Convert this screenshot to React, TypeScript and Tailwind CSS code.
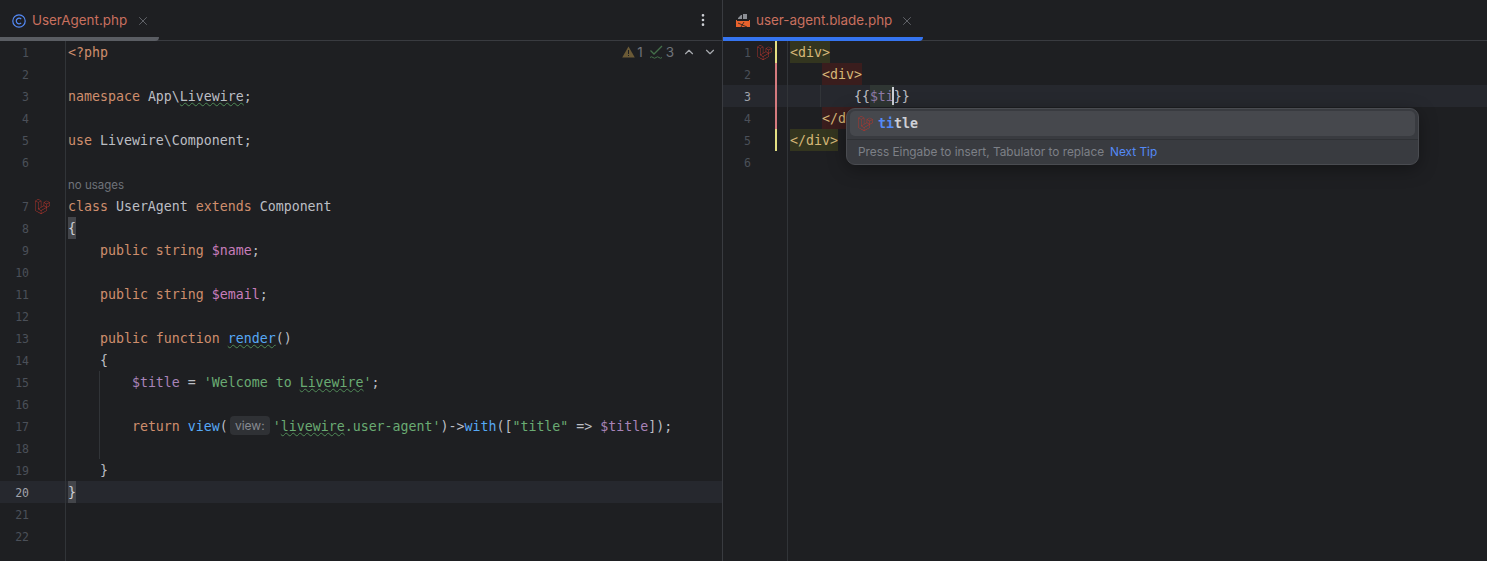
import React from "react";
import { ChevronDown, ChevronUp, MoreVertical, X } from "lucide-react";
import { SiLaravel } from "react-icons/si";

const ui = "font-['Inter',sans-serif]";
const mono = "font-['DejaVu_Sans_Mono',monospace] text-[13.28px] leading-[22px] whitespace-pre";
const num = "font-['DejaVu_Sans_Mono',monospace] text-[11.5px]";

const K = (p: { children: React.ReactNode }) => <span className="text-[#cf8e6d]">{p.children}</span>;
const V = (p: { children: React.ReactNode }) => <span className="text-[#c77dbb]">{p.children}</span>;
const L = (p: { children: React.ReactNode }) => <span className="text-[#a883b8]">{p.children}</span>;
const S = (p: { children: React.ReactNode }) => <span className="text-[#6aab73]">{p.children}</span>;
const F = (p: { children: React.ReactNode }) => <span className="text-[#56a8f5]">{p.children}</span>;
const Wavy = (p: { children: React.ReactNode; color: string }) => (
  <span className={`underline decoration-wavy decoration-1 underline-offset-1 ${p.color}`}>{p.children}</span>
);
const Match = (p: { children: React.ReactNode }) => (
  <span className="-mt-px inline-block h-[22px] bg-[#43454a] pt-px align-top text-[#ced0d6]">{p.children}</span>
);
const Tag = (p: { children: React.ReactNode; bg: string }) => (
  <span className={`-mt-px inline-block h-[22px] pt-px align-top text-[#d5b778] ${p.bg}`}>{p.children}</span>
);
const Guide = () => <span className="absolute top-0 bottom-0 left-[33px] w-px bg-[#313438]" />;

function PhpIcon() {
  return (
    <svg width="14" height="14" viewBox="0 0 14 14" fill="none" stroke="#548af7" strokeWidth="1.2">
      <circle cx="7" cy="7" r="6.2" />
      <path d="M9.2 5.2A2.8 2.8 0 1 0 9.2 8.8" />
    </svg>
  );
}

function BladeIcon() {
  return (
    <svg width="16" height="16" viewBox="0 0 16 16">
      <path d="M3 5l3-3h1v4H3zM8 1h4v5H8z" fill="#8b8e94" />
      <path d="M1 7h1v1h12V7h1v7H1z" fill="#e8622d" />
      <path d="M3 10l9 4M9 9l-3 5" stroke="#1e1f22" strokeWidth="0.8" fill="none" />
    </svg>
  );
}

function Tab(p: { icon: React.ReactNode; name: string; width: string; line: string; gap: string }) {
  return (
    <div className={`flex h-[41px] items-center rounded-br-sm border-b-4 pl-[12px] pt-[4px] ${p.width} ${p.line} ${p.gap}`}>
      {p.icon}
      <span className={`${ui} text-[13.4px] text-[#c9705f]`}>{p.name}</span>
      <X size={14} strokeWidth={1.2} className="ml-[3px] text-[#7d8087]" />
    </div>
  );
}

function Code(p: { children?: React.ReactNode; right?: React.ReactNode }) {
  return (
    <div className={`relative flex h-full flex-1 border-l border-[#313438] pl-[2px] pt-px text-[#bcbec4] ${mono}`}>
      <div className="flex-none">{p.children}</div>
      {p.right}
    </div>
  );
}

function LeftRow(p: { n: number; icon?: boolean; active?: boolean; children?: React.ReactNode; right?: React.ReactNode }) {
  return (
    <div className={`flex h-[22px] ${p.active ? "bg-[#26282e]" : ""}`}>
      <div className="flex h-full w-[65px] shrink-0 items-center">
        <span className={`${num} w-[29px] pt-[3px] text-right ${p.active ? "text-[#a1a3ab]" : "text-[#4b5059]"}`}>{p.n}</span>
        {p.icon && <SiLaravel size={15} className="ml-[6px] text-[#b5352d]" />}
      </div>
      <Code right={p.right}>{p.children}</Code>
    </div>
  );
}

function RightRow(p: { n: number; bar: string; icon?: boolean; active?: boolean; children?: React.ReactNode }) {
  return (
    <div className={`flex h-[22px] ${p.active ? "bg-[#26282e]" : ""}`}>
      <div className="flex h-full w-[64px] shrink-0 items-center">
        <span className={`${num} w-[28px] pt-[3px] text-right ${p.active ? "text-[#a1a3ab]" : "text-[#4b5059]"}`}>{p.n}</span>
        <span className="flex w-[24px] justify-center pl-[2px]">
          {p.icon && <SiLaravel size={15} className="text-[#b5352d]" />}
        </span>
        <span className={`h-full w-[2px] ${p.bar}`} />
      </div>
      <Code>{p.children}</Code>
    </div>
  );
}

export default function App() {
  return (
    <div className="flex h-[561px] w-full overflow-hidden bg-[#1e1f22]">
      <section className="flex w-[722px] shrink-0 flex-col">
        <header className="flex h-[41px] items-start border-b border-[#393b40]">
          <Tab icon={<PhpIcon />} name="UserAgent.php" width="w-[159px]" line="border-[#5a5d63]" gap="gap-[6px]" />
          <MoreVertical size={16} className="mt-[12px] ml-auto mr-[11px] text-[#ced0d6]" />
        </header>
        <div className="flex flex-1 flex-col">
          <LeftRow
            n={1}
            right={
              <div className={`${ui} ml-auto flex h-[20px] items-center pr-[5px] text-[13.5px] text-[#6f737a]`}>
                <svg width="13" height="12" viewBox="0 0 13 12" className="mr-[2px]">
                  <path d="M6.5 0.5L12.8 11.5H0.2Z" fill="#6b5a36" />
                  <path d="M6 4h1v4H6zM6 9h1v1H6z" fill="#1e1f22" />
                </svg>
                <span>1</span>
                <svg width="15" height="14" viewBox="0 0 15 14" fill="none" stroke="#44704a" strokeWidth="1.3" className="ml-[6px] mr-[2px]">
                  <path d="M1.5 5.5l3.5 3.5L13 1" />
                  <path d="M1 12.5q1.5-1.5 3 0t3 0 3 0 3 0" strokeWidth="1" />
                </svg>
                <span>3</span>
                <ChevronUp size={14} className="ml-[8px] text-[#a8abb0]" />
                <ChevronDown size={14} className="ml-[7px] text-[#a8abb0]" />
              </div>
            }
          >
            <K>&lt;?php</K>
          </LeftRow>
          <LeftRow n={2} />
          <LeftRow n={3}>
            <K>namespace </K>App\<Wavy color="decoration-[#4f8a57]">Livewire</Wavy>;
          </LeftRow>
          <LeftRow n={4} />
          <LeftRow n={5}>
            <K>use </K>Livewire\Component;
          </LeftRow>
          <LeftRow n={6} />
          <div className="flex h-[22px]">
            <div className="h-full w-[65px] shrink-0" />
            <div className={`${ui} flex h-full flex-1 items-center border-l border-[#313438] pl-[2px] pt-[3px] text-[11.5px] text-[#6f737a]`}>no usages</div>
          </div>
          <LeftRow n={7} icon>
            <K>class </K>UserAgent <K>extends </K>Component
          </LeftRow>
          <LeftRow n={8}><Match>{"{"}</Match></LeftRow>
          <LeftRow n={9}>
            {"    "}<K>public string </K><V>$name</V>;
          </LeftRow>
          <LeftRow n={10} />
          <LeftRow n={11}>
            {"    "}<K>public string </K><V>$email</V>;
          </LeftRow>
          <LeftRow n={12} />
          <LeftRow n={13}>
            {"    "}<K>public function </K><Wavy color="text-[#56a8f5] decoration-[#4f8a57]">render</Wavy>()
          </LeftRow>
          <LeftRow n={14}>{"    {"}</LeftRow>
          <LeftRow n={15}>
            <Guide />{"        "}<L>$title</L> = <S>'Welcome to <Wavy color="decoration-[#4f8a57]">Livewire</Wavy>'</S>;
          </LeftRow>
          <LeftRow n={16}><Guide /></LeftRow>
          <LeftRow n={17}>
            <Guide />{"        "}<K>return </K><F>view</F>(
            <span className={`${ui} ml-[2px] mr-[3px] inline-block h-[19px] w-[40px] rounded-[4px] bg-[#2f3135] text-center align-top text-[12px] leading-[19px] text-[#868a91]`}>view:</span>
            <S>'<Wavy color="decoration-[#4f8a57]">livewire</Wavy>.user-agent'</S>)-&gt;<F>with</F>([<S>"title"</S> =&gt; <L>$title</L>]);
          </LeftRow>
          <LeftRow n={18}><Guide /></LeftRow>
          <LeftRow n={19}>{"    }"}</LeftRow>
          <LeftRow n={20} active><Match>{"}"}</Match></LeftRow>
          <LeftRow n={21} />
          <LeftRow n={22} />
          <div className="flex flex-1">
            <div className="w-[65px] shrink-0" />
            <div className="flex-1 border-l border-[#313438]" />
          </div>
        </div>
      </section>

      <section className="flex flex-1 flex-col border-l border-[#393b40]">
        <header className="flex h-[41px] items-start border-b border-[#393b40]">
          <Tab icon={<BladeIcon />} name="user-agent.blade.php" width="w-[200px]" line="border-[#3574f0]" gap="gap-[5px]" />
        </header>
        <div className="relative flex flex-1 flex-col">
          <RightRow n={1} icon bar="bg-[#e3df82]">
            <Tag bg="bg-[#33351f]">&lt;div&gt;</Tag>
          </RightRow>
          <RightRow n={2} bar="bg-[#d47a7e]">
            {"    "}<Tag bg="bg-[#3a1d1d]">&lt;div&gt;</Tag>
          </RightRow>
          <RightRow n={3} active bar="bg-[#d47a7e]">
            <span className="absolute top-0 bottom-0 left-[32px] w-px bg-[#313438]" />
            {"        {{"}
            <span className="relative -mt-px inline-block h-[22px] bg-[#2f3633] pt-px align-top text-[#8f7aa8]">
              $ti
              <span className="absolute right-0 top-[2px] h-[18px] w-[2px] bg-[#ced0d6]" />
            </span>
            {"}}"}
          </RightRow>
          <RightRow n={4} bar="bg-[#d47a7e]">
            {"    "}<Tag bg="bg-[#3a1d1d]">&lt;/div&gt;</Tag>
          </RightRow>
          <RightRow n={5} bar="bg-[#e3df82]">
            <Tag bg="bg-[#33351f]">&lt;/div&gt;</Tag>
          </RightRow>
          <RightRow n={6} bar="" />
          <div className="flex flex-1">
            <div className="w-[64px] shrink-0" />
            <div className="flex-1 border-l border-[#313438]" />
          </div>

          <div className="absolute left-[123px] top-[67px] flex h-[57px] w-[573px] flex-col rounded-[9px] border border-[#4a4c51] bg-[#393b40] shadow-[0_4px_18px_rgba(0,0,0,0.35)]">
            <div className="px-[3px] pt-[2px]">
              <div className={`flex h-[25px] items-center rounded-[5px] bg-[#46484d] pl-[8px] ${mono}`}>
                <SiLaravel size={15} className="text-[#b5352d]" />
                <span className="ml-[5px] font-bold text-[#548af7]">ti</span>
                <span className="font-bold text-[#ced0d6]">tle</span>
              </div>
            </div>
            <div className={`${ui} mt-[3px] flex flex-1 items-center border-t border-[#2f3135] pl-[11px] pt-[1px] text-[11.8px] text-[#7d8087]`}>
              Press Eingabe to insert, Tabulator to replace
              <span className="ml-[6px] text-[#548af7]">Next Tip</span>
            </div>
          </div>
        </div>
      </section>
    </div>
  );
}
